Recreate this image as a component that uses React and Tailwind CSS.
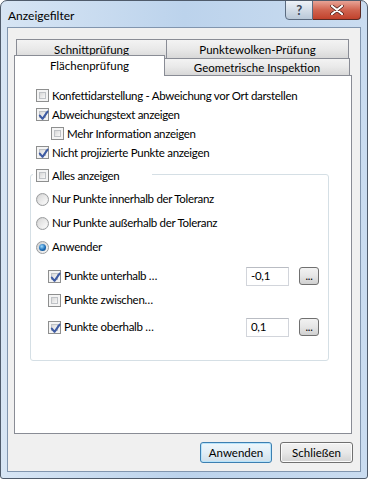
import React from "react";

const FONT = { fontFamily: 'Lato, "Noto Sans", sans-serif' };

function Box({ checked }) {
  return (
    <div className="w-[13px] h-[13px] shrink-0 border border-[#8e8f8f] bg-[#f4f4f4] p-[2px]">
      <div className="relative w-full h-full border border-[#bfc2c6] bg-gradient-to-br from-[#d8d8d8] to-[#f8f8f8]">
        {checked && (
          <svg viewBox="0 0 9 9" className="absolute left-[-2px] top-[-2px] w-[11px] h-[11px]">
            <polyline points="1.5,4.6 3.7,7.2 7.8,1.4" fill="none" stroke="#3e5ba3" strokeWidth="1.7" strokeLinejoin="round" strokeLinecap="round" />
          </svg>
        )}
      </div>
    </div>
  );
}

function Radio({ checked }) {
  return (
    <div className="w-[13px] h-[13px] shrink-0 rounded-full border border-[#9a9c9e] bg-gradient-to-br from-[#cfcfcf] to-[#f8f8f8] flex items-center justify-center">
      {checked ? (
        <div className="w-[7px] h-[7px] rounded-full bg-[radial-gradient(circle_at_40%_35%,#9fdcff,#1b6bb5_55%,#0b3f78)]" />
      ) : (
        <div className="w-[9px] h-[9px] rounded-full bg-gradient-to-br from-[#d9d9d9] to-[#fbfbfb]" />
      )}
    </div>
  );
}

function Row({ children, className = "" }) {
  return <div className={"flex items-center gap-[3px] " + className}>{children}</div>;
}

function Dots() {
  return (
    <div className="w-[20px] h-[18px] rounded-[3px] border border-[#707070] bg-gradient-to-b from-[#f2f2f2] via-[#e6e6e6] to-[#d0d0d0] flex items-end justify-center pb-[3px] text-[11px] leading-none">
      ...
    </div>
  );
}

function Input({ value }) {
  return (
    <div className="w-[43px] h-[19px] border border-[#d2d5db] border-t-[#b9bcc3] bg-white flex items-center pl-[4px]">
      {value}
    </div>
  );
}

function Btn({ children, def }) {
  return (
    <div
      className={
        "h-[21px] rounded-[3px] border flex items-center justify-center text-[11.5px] tracking-normal " +
        (def
          ? "w-[72px] border-[#3c7fb1] bg-gradient-to-b from-[#eef7fc] via-[#e2eef6] to-[#cfdfea] shadow-[inset_0_0_0_1px_#b8e4fb]"
          : "w-[73px] border-[#707070] bg-gradient-to-b from-[#f2f2f2] via-[#e8e8e8] to-[#d2d2d2] shadow-[inset_0_0_0_1px_#fbfbfb]")
      }
    >
      {children}
    </div>
  );
}

const TAB = "text-[11.5px] tracking-normal flex justify-center";

export default function App() {
  return (
    <div style={FONT} className="w-[368px] h-[479px] text-black text-[11.5px] tracking-[-0.3px] leading-none">
      <div className="w-full h-full border border-[#4f5b6b] rounded-t-[7px] rounded-b-[3px] bg-gradient-to-r from-[#d7e5f4] via-[#bcd3ec] to-[#cadcf0] flex flex-col overflow-hidden">
        {/* title bar */}
        <div className="h-[26px] flex justify-between">
          <div className="pl-[7px] pt-[9px] text-[12px] tracking-normal">Anzeigefilter</div>
          <div className="flex -mt-px mr-[6px] h-[20px]">
            <div className="w-[28px] h-full border border-[#5b6b80] rounded-bl-[4px] bg-gradient-to-b from-[#eef2f7] via-[#d3dde8] to-[#b9c8d8] flex items-center justify-center text-[#3a4658] text-[13px] font-bold">
              ?
            </div>
            <div className="w-[48px] h-full border border-l-0 border-[#5b2a24] rounded-br-[4px] bg-gradient-to-b from-[#e7a396] via-[#d0634f] to-[#c1412b] flex items-center justify-center">
              <svg viewBox="0 0 14 10" className="w-[14px] h-[10px]">
                <path d="M2 1 L12 9 M12 1 L2 9" stroke="#3a1410" strokeWidth="3.4" strokeLinecap="round" />
                <path d="M2 1 L12 9 M12 1 L2 9" stroke="#ffffff" strokeWidth="2.2" strokeLinecap="round" />
              </svg>
            </div>
          </div>
        </div>
        {/* client */}
        <div className="mx-[6px] mb-[6px] flex-1 border border-[#8195ae] bg-[#f0f0f0] flex flex-col pt-[11px]">
          <div className="ml-[6px] mr-[8px] flex flex-col">
            {/* tab row 1 */}
            <div className="flex h-[19px] pl-[2px]">
              <div className={"w-[151px] h-[19px] border border-b-0 border-[#898c95] bg-gradient-to-b from-[#f3f3f3] via-[#e9e9e9] to-[#d8d8d8] pt-[4px] " + TAB}>
                Schnittprüfung
              </div>
              <div className={"w-[182px] h-[19px] border border-l-0 border-b-0 border-[#898c95] bg-gradient-to-b from-[#f3f3f3] via-[#e9e9e9] to-[#d8d8d8] pt-[4px] " + TAB}>
                Punktewolken-Prüfung
              </div>
            </div>
            {/* tab row 2 */}
            <div className="relative flex items-end h-[20px] -mt-[3px]">
              <div className={"relative z-10 w-[151px] h-[21px] -mb-px border border-b-0 border-[#898c95] bg-white pt-[4px] " + TAB}>
                Flächenprüfung
              </div>
              <div className={"w-[185px] h-[17px] border border-l-0 border-b-0 border-[#898c95] bg-gradient-to-b from-[#f3f3f3] via-[#e9e9e9] to-[#d8d8d8] pt-[3px] " + TAB}>
                Geometrische Inspektion
              </div>
            </div>
            {/* panel */}
            <div className="h-[359px] border border-[#898c95] bg-white flex flex-col pt-[10px]">
              <div className="pl-[21px] flex flex-col">
                <Row className="h-[19px]">
                  <Box />
                  <span>Konfettidarstellung - Abweichung vor Ort darstellen</span>
                </Row>
                <Row className="h-[19px]">
                  <Box checked />
                  <span>Abweichungstext anzeigen</span>
                </Row>
                <Row className="h-[19px] pl-[15px]">
                  <Box />
                  <span>Mehr Information anzeigen</span>
                </Row>
                <Row className="h-[19px]">
                  <Box checked />
                  <span>Nicht projizierte Punkte anzeigen</span>
                </Row>
              </div>
              {/* group box */}
              <div className="ml-[15px] w-[299px] mt-[12px] border border-[#d5dfe5] rounded-[3px] flex flex-col pb-[21px]">
                <Row className="-mt-[7px] h-[15px] ml-[2px] w-[119px] bg-white pl-[3px]">
                  <Box />
                  <span>Alles anzeigen</span>
                </Row>
                <div className="pl-[5px] mt-[4px] flex flex-col">
                  <Row className="h-[24px]">
                    <Radio />
                    <span>Nur Punkte innerhalb der Toleranz</span>
                  </Row>
                  <Row className="h-[24px]">
                    <Radio />
                    <span>Nur Punkte außerhalb der Toleranz</span>
                  </Row>
                  <Row className="h-[24px]">
                    <Radio checked />
                    <span>Anwender</span>
                  </Row>
                </div>
                <div className="pl-[17px] mt-[5px] flex flex-col">
                  <div className="h-[24px] flex items-center">
                    <Row className="flex-1">
                      <Box checked />
                      <span>Punkte unterhalb …</span>
                    </Row>
                    <Input value="-0,1" />
                    <div className="ml-[10px] mr-[9px]">
                      <Dots />
                    </div>
                  </div>
                  <Row className="h-[24px]">
                    <Box />
                    <span>Punkte zwischen…</span>
                  </Row>
                  <div className="h-[24px] mt-[3px] flex items-center">
                    <Row className="flex-1">
                      <Box checked />
                      <span>Punkte oberhalb …</span>
                    </Row>
                    <Input value="0,1" />
                    <div className="ml-[10px] mr-[9px]">
                      <Dots />
                    </div>
                  </div>
                </div>
              </div>
            </div>
          </div>
          {/* buttons */}
          <div className="mt-[8px] flex justify-end gap-[8px] mr-[7px]">
            <Btn def>Anwenden</Btn>
            <Btn>Schließen</Btn>
          </div>
        </div>
      </div>
    </div>
  );
}
